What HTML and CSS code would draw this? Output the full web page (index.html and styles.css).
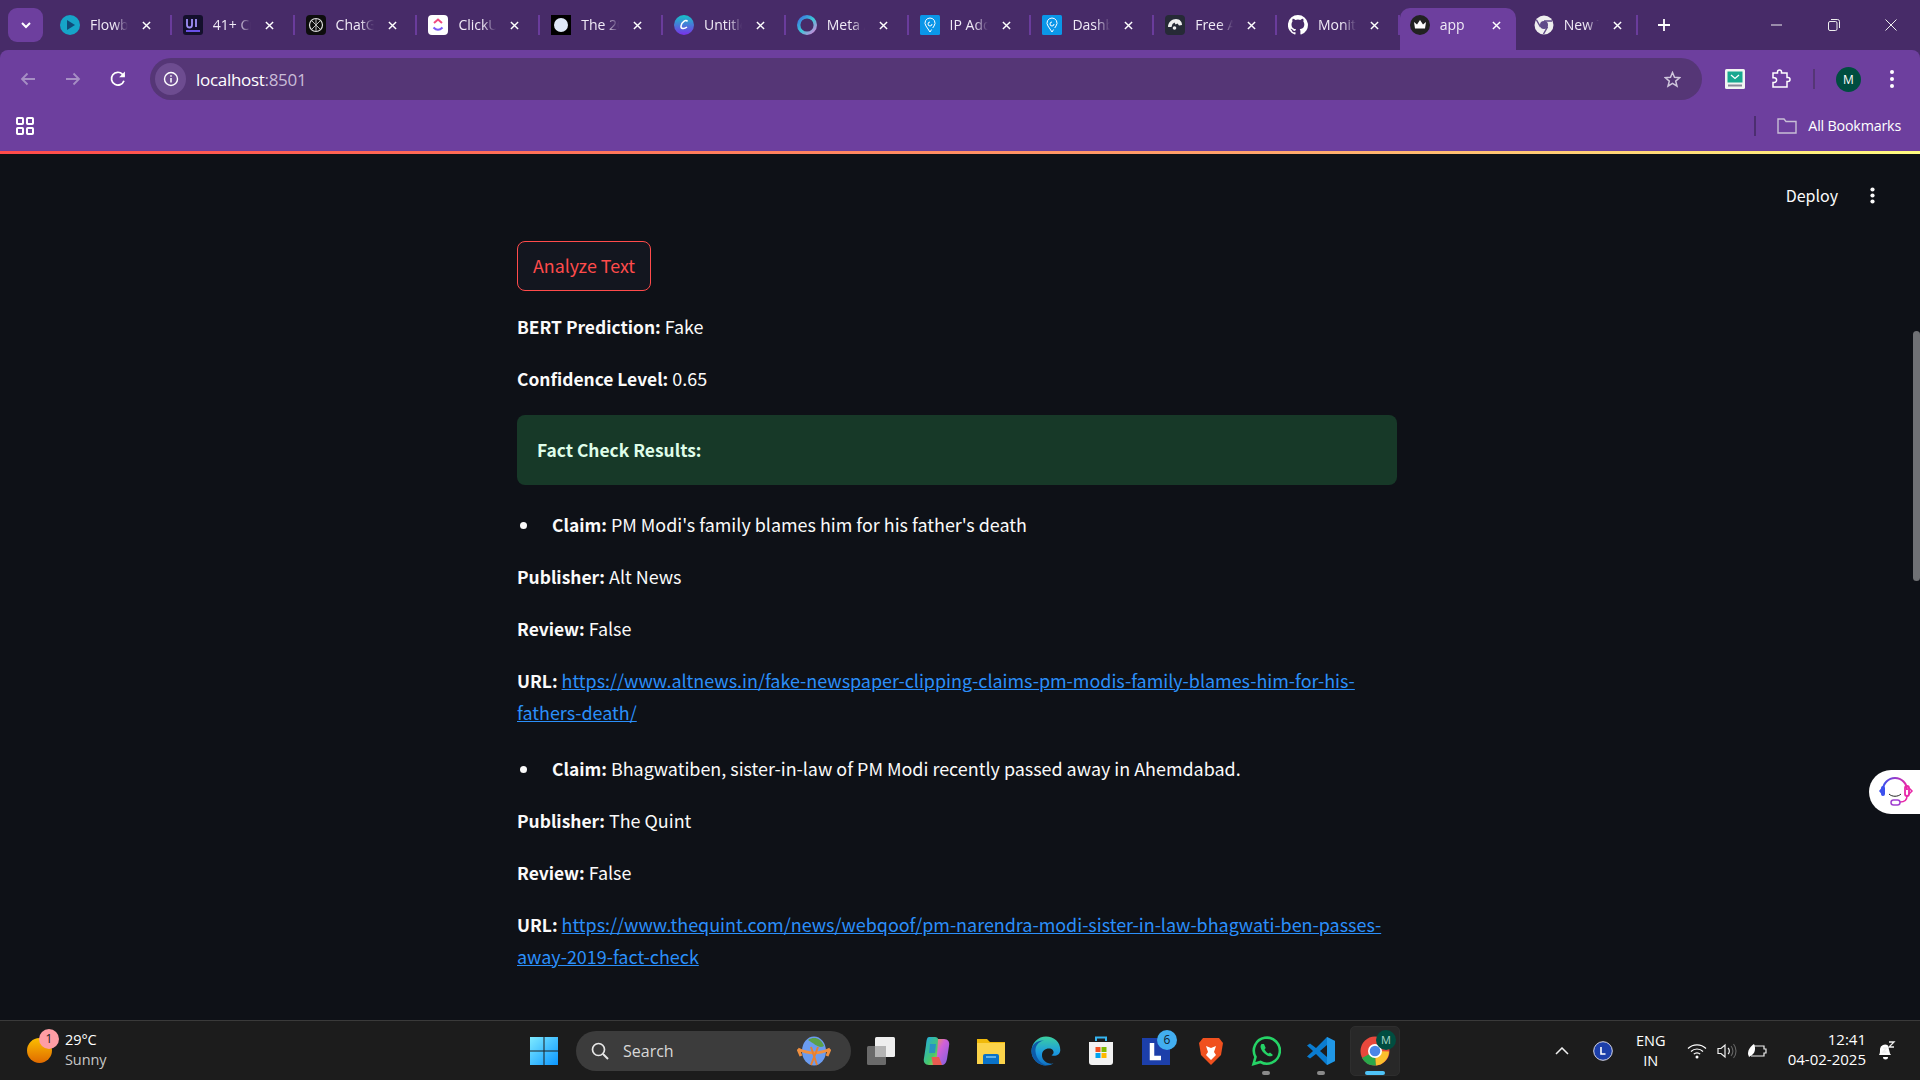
FILE: index.html
```html
<!DOCTYPE html>
<html lang="en">
<head>
<meta charset="utf-8">
<title>app</title>
<link rel="stylesheet" href="styles.css">
</head>
<body>
<svg class="defs" width="0" height="0" aria-hidden="true"><defs>
<symbol id="x" viewBox="0 0 10 10"><path d="M1 1l8 8M9 1l-8 8" stroke="#fff" stroke-width="1.6" fill="none"/></symbol>
<symbol id="pin" viewBox="0 0 20 20"><rect width="20" height="20" rx="1.5" fill="#0a96e8"/><path d="M10 3a5 5 0 0 0-4 8l4 6 1.600-2.500M10 7a2 2 0 1 0 2 2" stroke="#fff" stroke-width="1" fill="none"/><path d="M10 3a5 5 0 0 1 4 8l-1.300 2" stroke="#fff" stroke-width="1" fill="none"/></symbol>
<linearGradient id="meta" x1="0" y1="0" x2="1" y2="1"><stop offset="0" stop-color="#3b6fe0"/><stop offset=".5" stop-color="#3cc7d8"/><stop offset="1" stop-color="#d884d8"/></linearGradient>
<linearGradient id="headset" x1="0" y1="0" x2="1" y2="0"><stop offset="0" stop-color="#3c50ee"/><stop offset="1" stop-color="#e828a8"/></linearGradient>
<linearGradient id="canva" x1="0" y1="0" x2="0" y2="1"><stop offset="0" stop-color="#14c4c8"/><stop offset="1" stop-color="#7a30e8"/></linearGradient>
<linearGradient id="sun" x1="0" y1="0" x2="0" y2="1"><stop offset="0" stop-color="#fbbf00"/><stop offset="1" stop-color="#e06a00"/></linearGradient>
<linearGradient id="winlogo" x1="0" y1="0" x2="1" y2="1"><stop offset="0" stop-color="#7eeaff"/><stop offset="1" stop-color="#0b96ff"/></linearGradient>
<linearGradient id="copilotl" x1="0" y1="0" x2="1" y2="1"><stop offset="0" stop-color="#1fa8e8"/><stop offset=".6" stop-color="#48c86a"/><stop offset="1" stop-color="#f2c14a"/></linearGradient>
<linearGradient id="copilotr" x1="0" y1="0" x2="1" y2="1"><stop offset="0" stop-color="#f0a040"/><stop offset=".4" stop-color="#d060d8"/><stop offset="1" stop-color="#7a60e0"/></linearGradient>
<linearGradient id="edge" x1="0" y1="0" x2="0" y2="1"><stop offset="0" stop-color="#3cd0a0"/><stop offset=".55" stop-color="#1c9ae0"/><stop offset="1" stop-color="#1070c0"/></linearGradient>
</defs></svg>

<header class="chrome">
  <div class="tabstrip">
    <div class="tab-search"><svg width="10" height="7" viewBox="0 0 10 7"><path d="M1 1l4 4 4-4" stroke="#fff" stroke-width="2" fill="none"/></svg></div>
    <div class="tabs">
      <div class="tab"><svg class="fav" viewBox="0 0 20 20"><circle cx="10" cy="10" r="10" fill="#16a4c8"/><path d="M7 5l8 5-8 5z" fill="#104a78"/></svg><span class="tab-title">Flowbite</span><svg class="tab-x"><use href="#x"/></svg></div>
      <div class="tab"><svg class="fav" viewBox="0 0 20 20"><rect width="20" height="20" rx="3" fill="#14102c"/><path d="M4 4v6a2.500 2.500 0 0 0 5 0V4M13 4v8" stroke="#a090f8" stroke-width="1.800" fill="none"/><rect x="3" y="15" width="14" height="2" fill="#6a50e8"/></svg><span class="tab-title">41+ Creative</span><svg class="tab-x"><use href="#x"/></svg></div>
      <div class="tab"><svg class="fav" viewBox="0 0 20 20"><rect width="20" height="20" rx="4" fill="#0d0d0d"/><circle cx="10" cy="10" r="6.500" stroke="#ddd" stroke-width="1.200" fill="none"/><path d="M6 6l8 8M14 6l-8 8M10 3.500v13" stroke="#bbb" stroke-width="1"/></svg><span class="tab-title">ChatGPT</span><svg class="tab-x"><use href="#x"/></svg></div>
      <div class="tab"><svg class="fav" viewBox="0 0 20 20"><rect width="20" height="20" rx="4" fill="#fff"/><path d="M6 8l4-3.500L14 8" stroke="#f04a80" stroke-width="2" fill="none"/><path d="M5.500 12.500c3 3 6 3 9 0" stroke="#7a5af8" stroke-width="2" fill="none"/></svg><span class="tab-title">ClickUp</span><svg class="tab-x"><use href="#x"/></svg></div>
      <div class="tab"><svg class="fav" viewBox="0 0 20 20"><rect width="20" height="20" fill="#000"/><circle cx="10" cy="10" r="7" fill="#dfe8f8"/></svg><span class="tab-title">The 2025</span><svg class="tab-x"><use href="#x"/></svg></div>
      <div class="tab"><svg class="fav" viewBox="0 0 20 20"><circle cx="10" cy="10" r="10" fill="url(#canva)"/><path d="M13.500 6.500C12 4 7.500 7 7 11c-.4 3 3 3.500 6 1" stroke="#fff" stroke-width="1.500" fill="none"/></svg><span class="tab-title">Untitled</span><svg class="tab-x"><use href="#x"/></svg></div>
      <div class="tab"><svg class="fav" viewBox="0 0 20 20"><circle cx="10" cy="10" r="8.300" stroke="url(#meta)" stroke-width="3.400" fill="none"/></svg><span class="tab-title">Meta AI</span><svg class="tab-x"><use href="#x"/></svg></div>
      <div class="tab"><svg class="fav" viewBox="0 0 20 20"><use href="#pin"/></svg><span class="tab-title">IP Address</span><svg class="tab-x"><use href="#x"/></svg></div>
      <div class="tab"><svg class="fav" viewBox="0 0 20 20"><use href="#pin"/></svg><span class="tab-title">Dashboard</span><svg class="tab-x"><use href="#x"/></svg></div>
      <div class="tab"><svg class="fav" viewBox="0 0 20 20"><rect width="20" height="20" rx="4" fill="#262a36"/><path d="M3 12c0-5 4-8 8-8s6 3 6 6l-3 .5-1.500-2-2 1-1-2-2 1.500-1 3z" fill="#eee"/><circle cx="9.500" cy="13" r="1.800" fill="#eee"/></svg><span class="tab-title">Free API</span><svg class="tab-x"><use href="#x"/></svg></div>
      <div class="tab"><svg class="fav" viewBox="0 0 20 20"><path d="M10 0a10 10 0 0 0-3.200 19.500c.5.100.7-.2.7-.5v-1.800c-2.800.6-3.400-1.300-3.400-1.300-.5-1.200-1.100-1.500-1.100-1.500-.9-.6.100-.6.100-.6 1 .1 1.500 1 1.500 1 .9 1.500 2.300 1.100 2.900.8.100-.6.300-1.100.6-1.300-2.200-.3-4.600-1.100-4.600-5 0-1.100.4-2 1-2.700-.1-.2-.4-1.300.1-2.700 0 0 .8-.3 2.800 1a9.600 9.600 0 0 1 5 0c1.900-1.300 2.800-1 2.800-1 .5 1.400.2 2.400.1 2.700.6.700 1 1.600 1 2.700 0 3.800-2.300 4.700-4.600 4.900.4.300.7.900.7 1.900V19c0 .3.200.6.700.5A10 10 0 0 0 10 0z" fill="#fff"/></svg><span class="tab-title">Monitor</span><svg class="tab-x"><use href="#x"/></svg></div>
      <div class="tab tab-active"><svg class="fav" viewBox="0 0 20 20"><circle cx="10" cy="10" r="10" fill="#222"/><path d="M4 7l3 2.500L10 5l3 4.500L16 7l-1 6.500H5z" fill="#fff"/></svg><span class="tab-title">app</span><svg class="tab-x"><use href="#x"/></svg></div>
      <div class="tab tab-last"><svg class="fav" viewBox="0 0 20 20"><circle cx="10" cy="10" r="9.500" fill="#eee"/><circle cx="10" cy="10" r="4" fill="#5f4a88"/><path d="M10 6h8M6.500 12L2.500 5M13.500 12L9.500 19" stroke="#5f4a88" stroke-width="1.500"/></svg><span class="tab-title">New Tab</span><svg class="tab-x"><use href="#x"/></svg></div>
    </div>
    <svg class="new-tab" width="12" height="12" viewBox="0 0 12 12"><path d="M6 0v12M0 6h12" stroke="#fff" stroke-width="1.800"/></svg>
    <div class="win-controls">
      <svg width="12" height="12" viewBox="0 0 12 12"><path d="M0 6h11" stroke="#eee" stroke-width="1"/></svg>
      <svg width="12" height="12" viewBox="0 0 12 12"><rect x=".5" y="2.500" width="8.500" height="9" rx="1.500" stroke="#eee" fill="none"/><path d="M3 .5h6.500a2 2 0 0 1 2 2v6.500" stroke="#eee" fill="none"/></svg>
      <svg width="12" height="12" viewBox="0 0 12 12"><path d="M.5.5l11 11M11.500.5l-11 11" stroke="#eee" stroke-width="1"/></svg>
    </div>
  </div>
  <div class="toolbar">
    <div class="nav">
      <svg width="16" height="14" viewBox="0 0 16 14"><path d="M15 7H2M7.500 1.500L2 7l5.500 5.500" stroke="#a68fc4" stroke-width="1.800" fill="none"/></svg>
      <svg width="16" height="14" viewBox="0 0 16 14"><path d="M1 7h13M8.500 1.500L14 7l-5.500 5.500" stroke="#a68fc4" stroke-width="1.800" fill="none"/></svg>
      <svg width="16" height="16" viewBox="0 0 14 14"><path d="M12.200 8.500A5.600 5.600 0 1 1 11 2.900L12.500 4.500" stroke="#fff" stroke-width="1.500" fill="none"/><path d="M13 .5v5H8z" fill="#fff"/></svg>
    </div>
    <div class="omnibox">
      <div class="site-info"><svg width="16" height="16" viewBox="0 0 16 16"><circle cx="8" cy="8" r="6.500" stroke="#fff" stroke-width="1.400" fill="none"/><path d="M8 7v4.500M8 4.200v1.500" stroke="#fff" stroke-width="1.500"/></svg></div>
      <div class="url">localhost<span class="url-dim">:8501</span></div>
      <svg class="star" width="17" height="17" viewBox="0 0 17 17"><path d="M8.500 1.500l2 4.800 5.200.4-4 3.400 1.300 5.100-4.500-2.800-4.500 2.800 1.300-5.100-4-3.400 5.200-.4z" stroke="#cfc6dc" stroke-width="1.500" fill="none"/></svg>
    </div>
    <div class="ext">
      <svg width="20" height="20" viewBox="0 0 20 20"><rect width="20" height="20" rx="1.500" fill="#f2f4f2"/><rect x="2.500" y="2.500" width="15" height="11" fill="#18a890"/><path d="M6 6l4 3.500L14 6" stroke="#fff" stroke-width="1.300" fill="none"/><rect x="3" y="15.500" width="14" height="2" fill="#889"/></svg>
      <svg class="ext-puzzle" width="20" height="20" viewBox="0 0 20 20"><path d="M2 4h4.500V3a2 2 0 0 1 4 0v1h5.500v4.500h1a2 2 0 0 1 0 4h-1V18H2v-4.500h1.200a2.400 2.400 0 0 0 0-4.800H2z" stroke="#fff" stroke-width="1.500" fill="none"/></svg>
      <div class="ext-sep"></div>
      <div class="avatar">M</div>
      <svg width="4" height="18" viewBox="0 0 4 18"><circle cx="2" cy="2" r="2" fill="#fff"/><circle cx="2" cy="9" r="2" fill="#fff"/><circle cx="2" cy="16" r="2" fill="#fff"/></svg>
    </div>
  </div>
  <div class="bookmarks">
    <svg width="18" height="18" viewBox="0 0 18 18"><g fill="none" stroke="#fff" stroke-width="2"><rect x="1" y="1" width="6" height="6" rx=".8"/><rect x="11" y="1" width="6" height="6" rx=".8"/><rect x="1" y="11" width="6" height="6" rx=".8"/><rect x="11" y="11" width="6" height="6" rx=".8"/></g></svg>
    <div class="bm-spacer"></div>
    <div class="bm-sep"></div>
    <svg class="bm-folder" width="20" height="16" viewBox="0 0 20 16"><path d="M1 15V1h6l2 2.500h10V15z" stroke="#c8bfd6" stroke-width="1.400" fill="none"/></svg>
    <span class="bm-label">All Bookmarks</span>
  </div>
  <div class="accent"></div>
</header>

<main class="page">
  <div class="app-bar">
    <span class="deploy">Deploy</span>
    <svg width="5" height="17" viewBox="0 0 5 17"><circle cx="2.500" cy="2.500" r="2.100" fill="#fafafa"/><circle cx="2.500" cy="8.500" r="2.100" fill="#fafafa"/><circle cx="2.500" cy="14.500" r="2.100" fill="#fafafa"/></svg>
  </div>
  <section class="content">
    <button class="analyze" type="button">Analyze Text</button>
    <p><strong>BERT Prediction:</strong> Fake</p>
    <p><strong>Confidence Level:</strong> 0.65</p>
    <div class="success"><strong>Fact Check Results:</strong></div>
    <ul><li><strong>Claim:</strong> PM Modi's family blames him for his father's death</li></ul>
    <p><strong>Publisher:</strong> Alt News</p>
    <p><strong>Review:</strong> False</p>
    <p><strong>URL:</strong> <a href="#">https://www.altnews.in/fake-newspaper-clipping-claims-pm-modis-family-blames-him-for-his-fathers-death/</a></p>
    <ul><li><strong>Claim:</strong> Bhagwatiben, sister-in-law of PM Modi recently passed away in Ahemdabad.</li></ul>
    <p><strong>Publisher:</strong> The Quint</p>
    <p><strong>Review:</strong> False</p>
    <p><strong>URL:</strong> <a href="#">https://www.thequint.com/news/webqoof/pm-narendra-modi-sister-in-law-bhagwati-ben-passes-away-2019-fact-check</a></p>
  </section>
  <div class="scroll-thumb"></div>
  <div class="help-tab"><svg width="38" height="38" viewBox="0 0 38 38"><path d="M7 17a12 12 0 0 1 24 0" stroke="url(#headset)" stroke-width="2" fill="none"/><path d="M7 13l-4 5 4 5z" fill="#3c50ee"/><rect x="5" y="13" width="4" height="10" rx="2" fill="#3c50ee"/><rect x="29" y="13" width="4" height="10" rx="2" stroke="#e828a8" stroke-width="1.800" fill="none"/><path d="M33 15l3 3-3 3" stroke="#e828a8" stroke-width="1.500" fill="none"/><path d="M13 21c3 3 9 3 12 0" stroke="#222" stroke-width="1" fill="none"/><path d="M31 23c0 5-4 6-7 6" stroke="#e828a8" stroke-width="1.500" fill="none"/><rect x="15" y="27" width="9" height="5" rx="2.500" stroke="#a040d0" stroke-width="1.500" fill="none"/></svg></div>
</main>

<footer class="taskbar">
  <div class="weather">
    <div class="sun"><svg width="25" height="25" viewBox="0 0 25 25"><circle cx="12.500" cy="12.500" r="12.500" fill="url(#sun)"/></svg><span class="sun-badge">1</span></div>
    <div class="weather-text"><span>29°C</span><span class="dim">Sunny</span></div>
  </div>
  <div class="center">
    <svg class="start" width="30" height="30" viewBox="0 0 30 30"><path d="M1 1h13.500v13.500H1zM15.500 1H29v13.500H15.500zM1 15.500h13.500V29H1zM15.500 15.500H29V29H15.500z" fill="url(#winlogo)"/></svg>
    <div class="search">
      <svg width="20" height="20" viewBox="0 0 20 20"><circle cx="8.500" cy="8.500" r="6" stroke="#e8e8e8" stroke-width="1.700" fill="none"/><path d="M13 13l5 5" stroke="#e8e8e8" stroke-width="1.900"/></svg>
      <span class="search-label">Search</span>
      <svg class="search-art" width="34" height="30" viewBox="0 0 34 30"><ellipse cx="17" cy="15" rx="12" ry="14.500" fill="#6b9cf0"/><path d="M11 4c6-4 13-2 16 6-5 3-9-2-16-6z" fill="#5aa04a"/><path d="M1 13c10 5 22 5 32 0M1 13l3 7M33 13l-3 7" stroke="#f09040" stroke-width="3" fill="none"/><path d="M14 11l6 18M21 11l-7 18" stroke="#e88030" stroke-width="2"/></svg>
    </div>
    <div class="apps">
      <div class="app"><svg width="30" height="30" viewBox="0 0 30 30"><rect x="1" y="10" width="19" height="19" rx="1.500" fill="#6a6a6a"/><rect x="9" y="1" width="20" height="20" rx="1.500" fill="#eee"/><rect x="9" y="10" width="11" height="11" fill="#b4b4b4"/></svg></div>
      <div class="app"><svg width="30" height="30" viewBox="0 0 30 30"><path d="M8 1h6c2 0 3 1 3.500 3l2 8-6 17H8c-4 0-6-3-5-7l2-13c.5-5 1-8 3-8z" fill="url(#copilotl)"/><path d="M17 3h6c4 0 6 3 5 7l-2 13c-1 4-2 6-6 6h-7l3-9 1-17z" fill="url(#copilotr)"/><path d="M12 29l-1.500-8H18l3 8z" fill="#e85a50"/><path d="M9 8h6l-1 9H8z" fill="#2080d8" opacity=".7"/></svg></div>
      <div class="app"><svg width="30" height="30" viewBox="0 0 30 30"><path d="M1 3h10l3 3h15v22H1z" fill="#f0b90a"/><path d="M1 7h28v21H1z" fill="#fbd34a"/><path d="M7 28v-8a2 2 0 0 1 2-2h12a2 2 0 0 1 2 2v8z" fill="#0a72c8"/><path d="M10 21h10" stroke="#7cc8f4" stroke-width="1.500"/></svg></div>
      <div class="app"><svg width="30" height="30" viewBox="0 0 30 30"><path d="M15 .5A14.500 14.500 0 0 0 .5 15c0 8 6.500 14.500 14.500 14.500 3 0 5.500-.8 7.500-2-6 1-12-3-11.500-9 .2-3.500 3-6 7-6 3 0 5 2 4.500 4.500-.3 1-1 1.800-2 2.200 3.500 1.500 8.500 0 8.800-5C29.500 6 23 .5 15 .5z" fill="url(#edge)"/><path d="M.5 15C.5 8 7 4 13 4.500c-6 1-9 6-8.500 11 .5 6 4.500 12 11 14C7 29.500.5 23 .5 15z" fill="#0d5aa8"/></svg></div>
      <div class="app"><svg width="30" height="30" viewBox="0 0 30 30"><path d="M10 5V1.500h10V5" stroke="#35b4f0" stroke-width="2" fill="none"/><path d="M3 6h24v20a3 3 0 0 1-3 3H6a3 3 0 0 1-3-3z" fill="#f2f2f2"/><rect x="9.500" y="11" width="5" height="5" fill="#f25022"/><rect x="15.500" y="11" width="5" height="5" fill="#7fba00"/><rect x="9.500" y="17" width="5" height="5" fill="#00a4ef"/><rect x="15.500" y="17" width="5" height="5" fill="#ffb900"/></svg></div>
      <div class="app"><svg width="30" height="30" viewBox="0 0 30 30"><rect x="1" y="2" width="28" height="27" fill="#1c3faa"/><path d="M11 7v15h9" stroke="#fff" stroke-width="4.500" fill="none"/></svg><span class="app-badge">6</span></div>
      <div class="app"><svg width="30" height="30" viewBox="0 0 30 30"><path d="M7 2h16l4 5-2 12-10 10L5 19 3 7z" fill="#f0501e"/><path d="M10 10l5 2 5-2-2 6 2 3-5 5-5-5 2-3z" fill="#fff"/></svg></div>
      <div class="app"><svg width="30" height="30" viewBox="0 0 30 30"><path d="M2.500 28l2-7a13 13 0 1 1 5 5z" stroke="#25d366" stroke-width="2.600" fill="none"/><path d="M10.500 8c-2 2-1 6 3 9.500s7 3.500 8.500 1.500l-3-2.500-1.500 1c-2-1-3-2.500-4-4l1.200-1.500L13 8z" fill="#25d366"/></svg><i class="run"></i></div>
      <div class="app"><svg width="30" height="30" viewBox="0 0 30 30"><path d="M21 1l8 4v20l-8 4-11-11-6 4.500-3-2L7 15 1 9.500l3-2L10 12z" fill="#0a7cd0"/><path d="M21 9v12l-7-6z" fill="#1d1d1d"/><path d="M21 1l8 4v20l-8 4z" fill="#28a0ee" opacity=".75"/></svg><i class="run"></i></div>
      <div class="app app-active"><svg width="30" height="30" viewBox="0 0 30 30"><circle cx="15" cy="15" r="14.500" fill="#e8483c"/><path d="M15 15L2 22a14.500 14.500 0 0 0 14 7.500z" fill="#2ba84a"/><path d="M15 15l14 .5a14.500 14.500 0 0 1-13 14z" fill="#fbc02d"/><circle cx="15" cy="15" r="7" fill="#fff"/><circle cx="15" cy="15" r="5.300" fill="#4a86e8"/></svg><span class="chrome-badge">M</span><i class="run run-active"></i></div>
    </div>
  </div>
  <div class="tray">
    <svg width="14" height="8" viewBox="0 0 14 8"><path d="M1 7l6-6 6 6" stroke="#f0f0f0" stroke-width="1.500" fill="none"/></svg>
    <svg class="tray-l" width="20" height="20" viewBox="0 0 20 20"><circle cx="10" cy="10" r="9.300" fill="#1c3faa" stroke="#d8d8e8" stroke-width="1"/><path d="M8 6v7h4.500" stroke="#fff" stroke-width="1.600" fill="none"/></svg>
    <div class="lang"><span>ENG</span><span>IN</span></div>
    <div class="tray-icons">
      <svg width="20" height="16" viewBox="0 0 20 16"><path d="M1 5.500a13 13 0 0 1 18 0M4 8.500a8.500 8.500 0 0 1 12 0M6.800 11.200a4.500 4.500 0 0 1 6.400 0" stroke="#fff" stroke-width="1.200" fill="none"/><circle cx="10" cy="14" r="1.500" fill="#fff"/></svg>
      <svg width="20" height="16" viewBox="0 0 20 16"><path d="M1 5.500h3L8 2v12L4 10.500H1z" stroke="#eee" stroke-width="1.200" fill="none"/><path d="M11 5a4 4 0 0 1 0 6" stroke="#eee" stroke-width="1.200" fill="none"/><path d="M14 3a7.500 7.500 0 0 1 0 10M16.500 1a11 11 0 0 1 0 14" stroke="#666" stroke-width="1.100" fill="none"/></svg>
      <svg width="21" height="16" viewBox="0 0 21 16"><path d="M6 3h11v3h2v4h-2v3H4" stroke="#eee" stroke-width="1.200" fill="none"/><path d="M1 11c0-5 3-8 6-10 2 4 1 9-2 11l-3 2" fill="#fff"/></svg>
    </div>
    <div class="clock"><span>12:41</span><span>04-02-2025</span></div>
    <svg class="bell" width="20" height="21" viewBox="0 0 20 21"><path d="M3 15c1-2 1-3 1-6a5 5 0 0 1 8-3.500l2 8 1 1.500z" fill="#fff"/><path d="M7 17h5a2.500 2.500 0 0 1-5 0z" fill="#fff"/><path d="M7 8h3.500L7 12h3.500M13 2h5l-5 5h5" stroke="#eee" stroke-width="1.300" fill="none"/></svg>
  </div>
</footer>
</body>
</html>
```

FILE: styles.css
```css
* { box-sizing: border-box; }
html, body { margin: 0; height: 100%; }
body {
  width: 1920px;
  height: 1080px;
  overflow: hidden;
  display: flex;
  flex-direction: column;
  background: #0e1117;
  font-family: "Open Sans", "Noto Sans", sans-serif;
  color: #fff;
}
.defs { position: absolute; }
.chrome { flex: none; background: #472b68; }
.tabstrip { height: 50px; display: flex; align-items: center; }
.tab-search {
  width: 35px; height: 34px; margin-left: 8px; border-radius: 9px; background: #6d3f9e;
  display: flex; align-items: center; justify-content: center; flex: none;
}
.tabs { display: flex; height: 50px; margin-left: 6px; }
.tab {
  position: relative; width: 122.800px; height: 50px; padding: 15px 0 0 11px;
  display: flex; align-items: flex-start; flex: none;
}
.tab::after {
  content: ""; position: absolute; right: 0; top: 15px; width: 2px; height: 20px; background: #6a3c9c;
}
.tab-active::after { display: none; }
.tab-active {
  margin-top: 8px; height: 42px; padding-top: 7px; background: #6d3f9e;
  border-radius: 10px 10px 0 0; width: 116px; padding-left: 10px;
}
.tab-last { width: 122px; padding-left: 18px; }
.tab-last .tab-title { width: 35px; }
.fav { width: 20px; height: 20px; flex: none; }
.tab-title {
  width: 38px; margin-left: 10px; overflow: hidden; white-space: nowrap; font-size: 14px; line-height: 20px;
  color: #f0eaf6; -webkit-mask-image: linear-gradient(90deg, #000 65%, transparent);
  mask-image: linear-gradient(90deg, #000 65%, transparent);
}
.tab-x { width: 9px; height: 9px; margin: 6px 0 0 14px; flex: none; }
.new-tab { margin-left: 20px; flex: none; }
.win-controls { margin-left: auto; display: flex; gap: 45px; padding-right: 23px; }
.toolbar { height: 50px; background: #6d3f9e; border-radius: 8px 8px 0 0; display: flex; align-items: center; padding-top: 8px; }
.nav { display: flex; align-items: center; width: 150px; padding-left: 20px; gap: 29px; flex: none; }
.omnibox {
  width: 1552px; height: 42px; background: #553676; border-radius: 21px; display: flex; align-items: center; padding: 0 21px 0 5px; flex: none;
}
.site-info { height: 32px; border-radius: 50%; background: #6d4c90; display: flex; align-items: center; justify-content: center; width: 31px; }
.url { margin-left: 10px; font-size: 17px; color: #fff; flex: 1; letter-spacing: -.3px; }
.url-dim { color: #c9bcd8; }
.ext { display: flex; align-items: center; margin-left: 23px; flex: none; }
.ext-puzzle { margin-left: 26px; }
.ext-sep { width: 2px; height: 20px; background: #553676; margin: 0 21px 0 22px; }
.avatar { width: 25px; height: 25px; border-radius: 50%; background: #004d40; font-size: 12px; text-align: center; line-height: 25px; margin-right: 29px; }
.bookmarks { height: 51px; background: #6d3f9e; display: flex; align-items: center; padding: 0 19px 0 16px; }
.bm-spacer { flex: 1; }
.bm-sep { width: 2px; height: 20px; background: #4c2e70; margin-right: 21px; }
.bm-folder { margin-right: 11px; }
.bm-label { font-size: 14.300px; letter-spacing: -.2px; }
.accent { height: 3px; background: linear-gradient(90deg, #ff4b4b, #ffa36b 65%, #fffd80); }
.page { position: relative; flex: 1; min-height: 0; background: #0e1117; overflow: hidden; }
.app-bar { height: 62px; display: flex; align-items: center; justify-content: flex-end; gap: 32px; padding: 21px 45px 0 0; }
.deploy { font-size: 16px; font-family: "Noto Sans CJK SC", sans-serif; color: #fafafa; margin-bottom: 2px; }
.content {
  width: 880px; margin-left: 517px; padding-top: 25px;
  font-family: "Noto Sans CJK SC", "Noto Sans", sans-serif; font-size: 17.930px; line-height: 32px; color: #fafafa;
}
.content strong { font-weight: 700; font-size: 17.400px; line-height: 1; }
.analyze {
  display: block; width: 134px; height: 50px; border: 1px solid #ff4b4b; border-radius: 8px; background: #13161f;
  color: #ff4b4b; font: 400 17.850px/1 "Noto Sans CJK SC", sans-serif; padding: 0;
}
.content p { margin: 19px 0 0; padding-bottom: 1px; }
.content a { color: #2b8ffa; text-decoration: underline; }
.success {
  height: 70px; margin-top: 20px; padding: 0 20px; border-radius: 8px; background: #173928; color: #dffde9;
  display: flex; align-items: center;
}
.content ul { margin: 23px 0 0; padding: 0 0 1px; list-style: none; }
.content li::before {
  content: ""; display: inline-block; width: 7px; height: 7px; border-radius: 50%; background: #fafafa;
  margin: 0 25px 3px 3px; vertical-align: middle;
}
.scroll-thumb { position: absolute; top: 177px; right: 0; width: 7px; height: 250px; background: #6f7175; border-radius: 4px; }
.help-tab {
  position: absolute; right: 0; top: 616px; width: 51px; height: 44px; background: #fff; border-radius: 22px 0 0 22px;
  display: flex; align-items: center; padding-left: 7px;
}
.taskbar {
  flex: none; height: 60px; background: #1c1c1c; border-top: 1px solid #3a3a3a; display: flex; align-items: center; position: relative;
}
.weather { display: flex; align-items: center; padding-left: 27px; }
.sun { position: relative; width: 25px; height: 25px; }
.sun svg { display: block; }
.sun-badge {
  position: absolute; left: 12px; top: -9px; width: 20px; height: 20px; border-radius: 50%; background: #ff9da4; color: #222;
  font-size: 12px; line-height: 20px; text-align: center;
}
.weather-text { display: flex; flex-direction: column; margin: 0 0 2px 13px; font-size: 14.500px; line-height: 20px; letter-spacing: -.1px; }
.dim { color: #c8c8c8; }
.center { position: absolute; left: 529px; top: 0; height: 59px; display: flex; align-items: center; }
.start { flex: none; }
.search {
  width: 275px; height: 40px; margin-left: 17px; background: #3c3c3c; border-radius: 20px; display: flex; align-items: center; padding: 0 20px 0 14px;
  flex: none;
}
.search-label { margin-left: 13px; font-size: 16px; color: #d8d8d8; flex: 1; }
.apps { display: flex; margin-left: 2px; align-items: center; }
.app { position: relative; width: 55px; height: 50px; display: flex; align-items: center; justify-content: center; }
.app-badge {
  position: absolute; right: 6px; top: 4px; width: 20px; height: 20px; border-radius: 50%; background: #42aef0; color: #10202c;
  font-size: 12px; line-height: 20px; text-align: center;
}
.run { position: absolute; bottom: 1px; left: 23.500px; width: 8px; height: 4px; border-radius: 2px; background: #8a8a8a; }
.app-active { background: #282828; border: 1px solid #2e2e2e; border-radius: 5px; width: 50px; margin-left: 2px; }
.chrome-badge {
  position: absolute; right: 3px; top: 3px; width: 20px; height: 20px; border-radius: 50%; background: #004d40; color: #a8d8c8; font-size: 11px;
  line-height: 20px; text-align: center;
}
.run-active { left: 14px; width: 20px; background: #4fc3f7; bottom: 0; }
.tray { position: absolute; right: 0; top: 0; height: 59px; display: flex; align-items: center; padding-right: 24px; }
.tray-l { margin-left: 24px; }
.lang { display: flex; flex-direction: column; align-items: center; margin-left: 23px; font-size: 14.500px; line-height: 20px; width: 30px; }
.tray-icons { display: flex; align-items: center; gap: 10px; margin-left: 21px; }
.clock { display: flex; flex-direction: column; align-items: flex-end; margin: 0 0 3px 20px; font-size: 15px; line-height: 20px; }
.bell { margin-left: 10px; }
```
